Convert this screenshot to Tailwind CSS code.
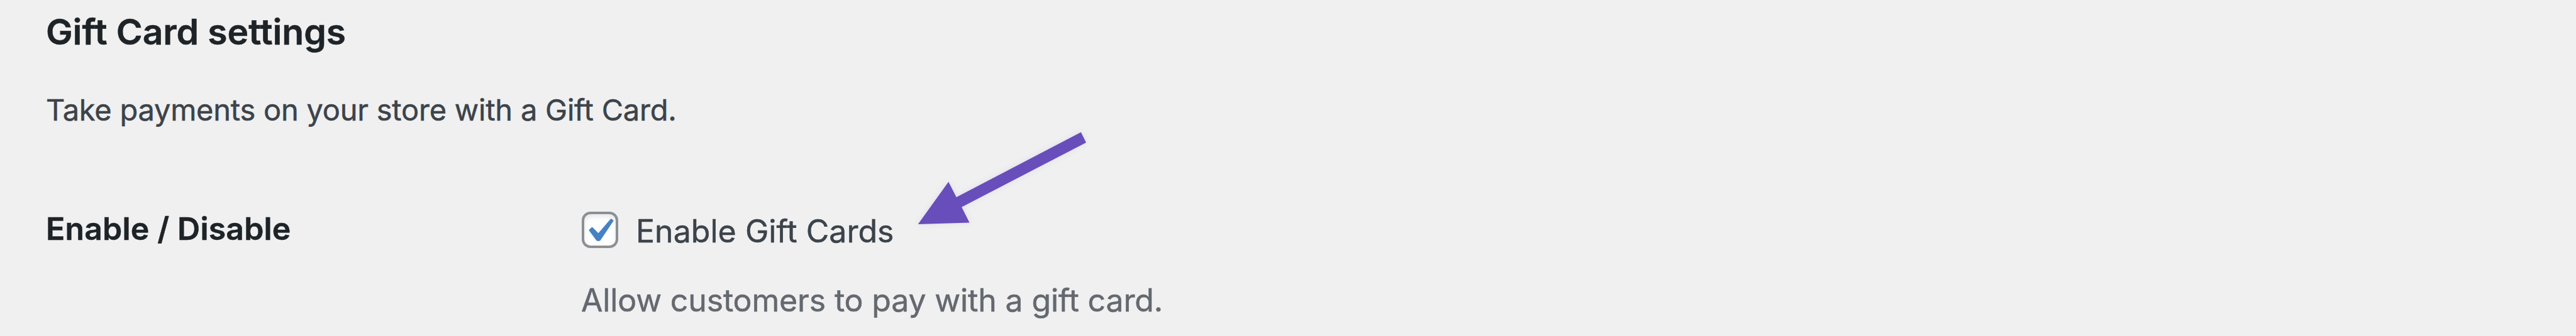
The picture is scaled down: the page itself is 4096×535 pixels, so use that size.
<!DOCTYPE html>
<html lang="en">

<head>
  <meta charset="UTF-8">
  <meta name="viewport" content="width=device-width, initial-scale=1.0">
  <title>Gift Card settings</title>
  <script src="https://cdn.jsdelivr.net/npm/@tailwindcss/browser@4"></script>
</head>

<body class="h-screen overflow-hidden bg-[#f0f0f0] font-['Inter',sans-serif] text-[#3c434a] [-webkit-text-stroke:0.5px]">

  <main class="relative h-full pl-[73px] pt-4">
    <h2 class="text-[57px] leading-[70px] tracking-[-0.08px] font-semibold text-[#1d2327]">Gift Card settings</h2>
    <p class="mt-[59px] text-[47px] leading-[60px] tracking-[-0.23px]">Take payments on your store with a Gift Card.</p>

    <div class="mt-[129px] flex items-start text-[50px] leading-[60px]">
      <div class="w-[852px] shrink-0 tracking-[0.17px] font-semibold text-[#1d2327]">Enable / Disable</div>
      <div class="pt-[3px]">
        <label class="flex items-start">
          <span class="block size-[58px] rounded-[14px] border-4 border-[#8c8f94] bg-white shadow-[inset_0_4px_8px_rgba(0,0,0,0.1)]">
            <svg class="-m-1 size-[58px] max-w-none" viewBox="0 0 58 58" fill="#4682c3">
              <path d="M11.2 29.4L15.5 25Q16.7 24.5 17.8 25.6L26.4 34.3L45.8 11.8Q47 10.8 48.2 12L50.7 14.6L29.3 46.3Q26.4 47.4 23.6 46.3Z" />
            </svg>
          </span>
          <span class="ml-[28px] pt-px tracking-[0.04px]">Enable Gift Cards</span>
        </label>
        <p class="mt-[50px] -ml-px tracking-[-0.155px] text-[#646970]">Allow customers to pay with a gift card.</p>
      </div>
    </div>

    <!-- arrow pointing at the checkbox label -->
    <svg class="absolute left-[1440px] top-[190px] h-[190px] w-[310px] drop-shadow-[0_0_5px_rgba(104,78,186,0.12)]" viewBox="0 0 310 190" fill="#684eba">
      <path d="M19.7 167L68.2 99.6L80.7 124L278.8 20.5L287 36.9L89.1 139.8L101.6 164.4Z" />
    </svg>
  </main>

</body>

</html>
